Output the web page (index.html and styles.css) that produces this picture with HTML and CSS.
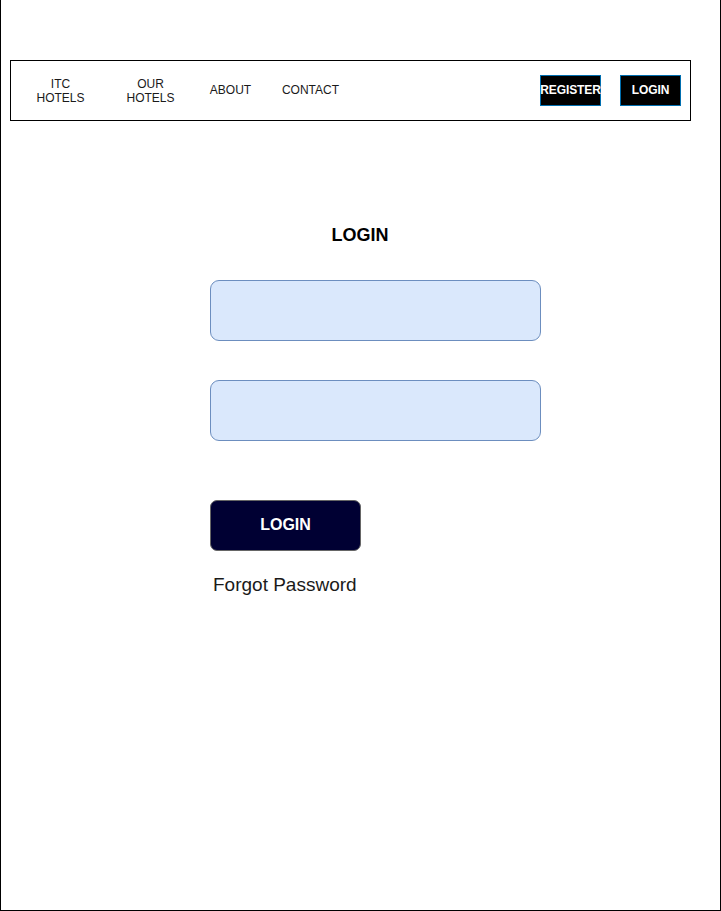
FILE: index.html
```html
<!DOCTYPE html>
<html lang="en">
<head>
<meta charset="utf-8">
<title>Login</title>
<link rel="stylesheet" href="styles.css">
</head>
<body>
<div class="frame">
  <nav class="topbar">
    <a class="nav-item first">ITC<br>HOTELS</a>
    <a class="nav-item wide-gap">OUR<br>HOTELS</a>
    <a class="nav-item single">ABOUT</a>
    <a class="nav-item single">CONTACT</a>
    <div class="nav-actions">
      <button class="nav-btn">REGISTER</button>
      <button class="nav-btn">LOGIN</button>
    </div>
  </nav>
  <main class="login">
    <h1 class="login-title">LOGIN</h1>
    <div class="field first-field"></div>
    <div class="field second-field"></div>
    <button class="login-btn">LOGIN</button>
    <p class="forgot">Forgot Password</p>
  </main>
</div>
</body>
</html>
```
FILE: styles.css
```css
html, body {
  margin: 0;
  padding: 0;
  background: #fff;
}
body {
  font-family: "Liberation Sans", Arial, Helvetica, sans-serif;
}
.frame {
  width: 721px;
  height: 911px;
  box-sizing: border-box;
  border-left: 1px solid #000;
  border-right: 1px solid #000;
  border-bottom: 1px solid #000;
  padding: 60px 0 0 9px;
  overflow: hidden;
}
.topbar {
  width: 681px;
  height: 61px;
  box-sizing: border-box;
  border: 1px solid #000;
  display: flex;
  align-items: center;
  padding-left: 19px;
  padding-right: 9px;
}
.nav-item {
  width: 61px;
  text-align: center;
  font-size: 12px;
  line-height: 14px;
  color: #1a1a1a;
  margin-left: 19px;
}
.nav-item.single {
  margin-bottom: 2px;
}
.nav-item.first {
  margin-left: 0;
}
.nav-item.wide-gap {
  margin-left: 29px;
}
.nav-actions {
  margin-left: auto;
  display: flex;
  gap: 19px;
}
.nav-btn {
  width: 61px;
  height: 31px;
  box-sizing: border-box;
  background: #000;
  border: 1px solid #006eaf;
  color: #fff;
  font-family: "Liberation Sans", Arial, sans-serif;
  font-size: 12px;
  font-weight: bold;
  padding: 0 0 2px 0;
  display: flex;
  align-items: center;
  justify-content: center;
  white-space: nowrap;
  overflow: visible;
  letter-spacing: -0.1px;
}
.login {
  margin-left: 200px;
  width: 331px;
  display: flex;
  flex-direction: column;
}
.login-title {
  width: 300px;
  margin: 104px 0 0 0;
  text-align: center;
  font-size: 18px;
  line-height: 21px;
  font-weight: bold;
  color: #000;
}
.field {
  width: 331px;
  height: 61px;
  box-sizing: border-box;
  background: #dae8fc;
  border: 1px solid #6c8ebf;
  border-radius: 9px;
}
.first-field {
  margin-top: 34px;
}
.second-field {
  margin-top: 39px;
}
.login-btn {
  margin-top: 59px;
  width: 151px;
  height: 51px;
  box-sizing: border-box;
  background: #000033;
  border: 1px solid #666;
  border-radius: 7px;
  color: #fff;
  font-family: "Liberation Sans", Arial, sans-serif;
  font-size: 16px;
  font-weight: bold;
  padding: 0 0 2px 0;
}
.forgot {
  margin: 23px 0 0 3px;
  font-size: 19px;
  line-height: 22px;
  color: #1a1a1a;
}
```
